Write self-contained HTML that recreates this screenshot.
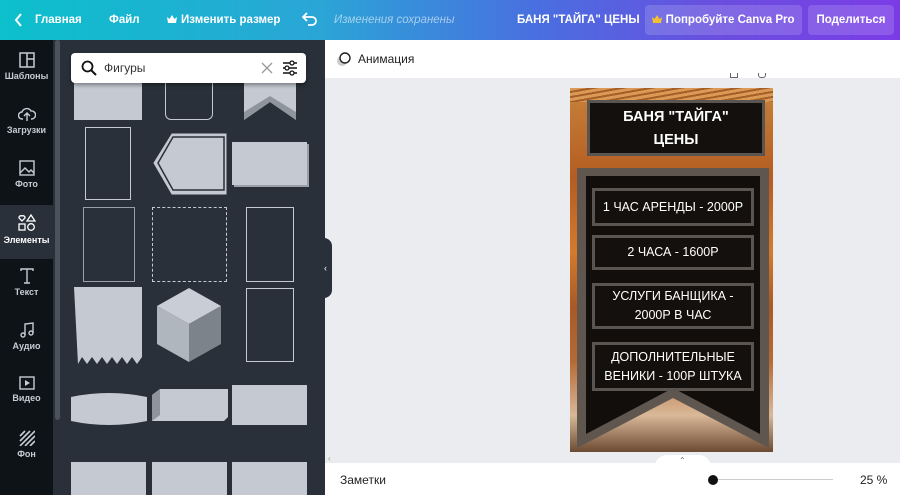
<!DOCTYPE html>
<html><head><meta charset="utf-8"><style>
*{margin:0;padding:0;box-sizing:border-box}
body{width:900px;height:495px;overflow:hidden;font-family:"Liberation Sans","DejaVu Sans",sans-serif;background:#ebecf0;position:relative}
.top{position:absolute;left:0;top:0;width:900px;height:40px;background:linear-gradient(90deg,#0cc0cc 0%,#2aa6d6 35%,#4a6ee0 60%,#6a4fe0 80%,#7b3ce6 100%);color:#fff;font-size:11.5px;font-weight:bold}
.top span{position:absolute;top:13px;line-height:14px;height:14px;white-space:nowrap}
.btn{position:absolute;top:5px;height:30px;background:rgba(255,255,255,.15);border-radius:4px;color:#fff;font-size:11.5px;font-weight:bold;line-height:30px;text-align:center}
.side{position:absolute;left:0;top:40px;width:53px;height:455px;background:#0e1318}
.si{position:absolute;left:0;width:53px;height:54px;color:#c8ccd2;font-size:9px;font-weight:bold;text-align:center}
.si svg{display:block;margin:9px auto 3px}
.panel{position:absolute;left:53px;top:40px;width:272px;height:455px;background:#293039;overflow:hidden}
.s{position:absolute;background:#c5cad2}
.o{position:absolute;border:1.5px solid #c5cad2}
.tool{position:absolute;left:325px;top:40px;width:575px;height:38px;background:#fff;font-size:12px;color:#222}
.bot{position:absolute;left:325px;top:463px;width:575px;height:32px;background:#fff;font-size:12px;color:#222}
.design{position:absolute;left:570px;top:88px;width:203px;height:364px;overflow:hidden;background:linear-gradient(180deg,#c7823a 0%,#b45c22 25%,#d57a2c 45%,#a85a26 60%,#b56a36 75%,#d9b898 90%,#6b4a32 100%)}
.pb{position:absolute;left:22px;width:162px;background:#14100d;border:3px solid #5a5550;color:#fff;font-size:12.5px;text-align:center;display:flex;align-items:center;justify-content:center;line-height:19px}
</style></head><body>
<div class="top">
<svg style="position:absolute;left:14px;top:13px" width="10" height="14"><path d="M7 1L2 7l5 6" stroke="#fff" stroke-width="2" fill="none"/></svg>
<span style="left:35px">Главная</span><span style="left:109px">Файл</span>
<svg style="position:absolute;left:167px;top:15px" width="10" height="9"><path d="M0 2l2.5 2L5 0l2.5 4L10 2 9 8H1z" fill="#fff"/></svg>
<span style="left:181px">Изменить размер</span>
<svg style="position:absolute;left:302px;top:12px" width="16" height="14"><path d="M5 1L1 5l4 4M1 5h9a4 4 0 010 8H6" stroke="#fff" stroke-width="1.8" fill="none"/></svg>
<span style="left:334px;font-style:italic;font-weight:normal;color:rgba(255,255,255,.55)">Изменения сохранены</span>
<span style="left:517px">БАНЯ "ТАЙГА" ЦЕНЫ</span>
<div class="btn" style="left:645px;width:157px"><svg width="10" height="9" style="vertical-align:-1px"><path d="M0 2l2.5 2L5 0l2.5 4L10 2 9 8H1z" fill="#f5c030"/></svg> Попробуйте Canva Pro</div>
<div class="btn" style="left:808px;width:86px">Поделиться</div>
</div>
<div class="side">
<div class="si" style="top:3px"><svg width="16" height="16"><rect x="1" y="1" width="14" height="14" fill="none" stroke="#c8ccd2" stroke-width="1.5"/><path d="M8 1v14M8 7h7" stroke="#c8ccd2" stroke-width="1.5"/></svg>Шаблоны</div>
<div class="si" style="top:57px"><svg width="18" height="16"><path d="M5 13H4a3 3 0 010-7 5 5 0 019-1 3.5 3.5 0 011 8h-1M9 15V8M6 10l3-3 3 3" fill="none" stroke="#c8ccd2" stroke-width="1.4"/></svg>Загрузки</div>
<div class="si" style="top:111px"><svg width="16" height="16"><rect x="1" y="1" width="14" height="14" fill="none" stroke="#c8ccd2" stroke-width="1.4"/><path d="M1 13l5-5 4 4 2-2 3 3" fill="none" stroke="#c8ccd2" stroke-width="1.4"/></svg>Фото</div>
<div class="si" style="top:165px;background:#293039;color:#fff"><svg width="18" height="18"><path d="M4 7L1 4a2 2 0 013-2 2 2 0 013 2z" fill="none" stroke="#fff" stroke-width="1.3"/><path d="M13 1l4 6h-8z" fill="none" stroke="#fff" stroke-width="1.3"/><rect x="1" y="10" width="6" height="6" fill="none" stroke="#fff" stroke-width="1.3"/><circle cx="13" cy="13" r="3.3" fill="none" stroke="#fff" stroke-width="1.3"/></svg>Элементы</div>
<div class="si" style="top:219px"><svg width="16" height="16"><path d="M2 3V1h12v2M8 1v14M5 15h6" fill="none" stroke="#c8ccd2" stroke-width="1.4"/></svg>Текст</div>
<div class="si" style="top:273px"><svg width="16" height="16"><path d="M6 13V2l8-1v10" fill="none" stroke="#c8ccd2" stroke-width="1.4"/><circle cx="4" cy="13" r="2" fill="none" stroke="#c8ccd2" stroke-width="1.4"/><circle cx="12" cy="11" r="2" fill="none" stroke="#c8ccd2" stroke-width="1.4"/></svg>Аудио</div>
<div class="si" style="top:327px"><svg width="16" height="14"><rect x="1" y="1" width="14" height="12" fill="none" stroke="#c8ccd2" stroke-width="1.4"/><path d="M6 4v6l5-3z" fill="#c8ccd2"/></svg>Видео</div>
<div class="si" style="top:381px"><svg width="16" height="16"><path d="M1 6L6 1M1 11L11 1M1 16L16 1M6 16L16 6M11 16l5-5" stroke="#c8ccd2" stroke-width="1.6"/></svg>Фон</div>
</div>
<div class="panel">
<div style="position:absolute;left:2px;top:0;width:5px;height:380px;background:#4a525c;border-radius:3px"></div>
<div class="s" style="left:21px;top:40px;width:68px;height:40px"></div>
<div class="o" style="left:112px;top:40px;width:48px;height:40px;border-top:none;border-radius:0 0 6px 6px"></div>
<svg style="position:absolute;left:191px;top:40px" width="52" height="40"><path d="M0 0h52v40L26 22 0 40z" fill="#c5cad2"/><path d="M0 40L26 22 52 40V32L26 16 0 32z" fill="#8f959d"/></svg>
<div class="o" style="left:32px;top:87px;width:46px;height:73px;border-width:1px"></div>
<svg style="position:absolute;left:99px;top:93px" width="75" height="62"><path d="M74 1H20L2 30l18 31h54z" fill="#c5cad2" stroke="#c5cad2" stroke-width="1"/><path d="M72 4H21L6 30l15 27h51z" fill="none" stroke="#293039" stroke-width="1.5"/></svg>
<div class="s" style="left:179px;top:102px;width:75px;height:43px;box-shadow:2px 2px 0 #9aa0a8"></div>
<div class="o" style="left:30px;top:167px;width:52px;height:75px;border-width:1px;border-color:#9aa0a8"></div>
<div class="o" style="left:99px;top:167px;width:75px;height:75px;border-style:dashed;border-width:1.5px"></div>
<div class="o" style="left:193px;top:167px;width:48px;height:75px"></div>
<svg style="position:absolute;left:21px;top:247px" width="68" height="78"><path d="M0 0h68v70l-5 7-5-7-5 7-5-7-5 7-5-7-5 7-5-7-5 7-5-7-5 7-5-7-4 7z" fill="#c5cad2"/></svg>
<svg style="position:absolute;left:104px;top:248px" width="64" height="74"><path d="M32 0l32 18L32 36 0 18z" fill="#c9ced6"/><path d="M0 18l32 18v38L0 56z" fill="#b0b6be"/><path d="M64 18L32 36v38l32-18z" fill="#7d838b"/></svg>
<div class="o" style="left:193px;top:248px;width:48px;height:74px"></div>
<svg style="position:absolute;left:18px;top:353px" width="76" height="32"><path d="M0 4Q38-4 76 4V28Q38 36 0 28z" fill="#c5cad2"/></svg>
<svg style="position:absolute;left:99px;top:349px" width="76" height="32"><path d="M8 0h68v28l-4 4H0V6z" fill="#c5cad2"/><path d="M0 6L8 0v26L0 32z" fill="#8f959d"/></svg>
<div class="s" style="left:179px;top:345px;width:75px;height:40px"></div>
<div class="s" style="left:18px;top:422px;width:75px;height:40px"></div>
<div class="s" style="left:99px;top:422px;width:75px;height:40px"></div>
<div class="s" style="left:179px;top:422px;width:75px;height:40px"></div>
<div style="position:absolute;left:18px;top:13px;width:235px;height:30px;background:#fff;border-radius:4px;box-shadow:0 2px 4px rgba(0,0,0,.4)">
<svg style="position:absolute;left:10px;top:7px" width="16" height="16"><circle cx="6.5" cy="6.5" r="5" fill="none" stroke="#111" stroke-width="1.8"/><path d="M10 10l5 5" stroke="#111" stroke-width="2"/></svg>
<span style="position:absolute;left:33px;top:8px;font-size:12px;color:#333">Фигуры</span>
<svg style="position:absolute;left:190px;top:9px" width="12" height="12"><path d="M1 1l10 10M11 1L1 11" stroke="#999" stroke-width="1.3"/></svg>
<svg style="position:absolute;left:211px;top:7px" width="16" height="16"><path d="M1 3h14M1 8h14M1 13h14" stroke="#111" stroke-width="1.4"/><circle cx="10" cy="3" r="2" fill="#fff" stroke="#111" stroke-width="1.3"/><circle cx="5" cy="8" r="2" fill="#fff" stroke="#111" stroke-width="1.3"/><circle cx="10" cy="13" r="2" fill="#fff" stroke="#111" stroke-width="1.3"/></svg>
</div>
</div>
<div style="position:absolute;left:320px;top:238px;width:12px;height:60px;background:#293039;border-radius:0 8px 8px 0"></div>
<div style="position:absolute;left:324px;top:263px;color:#fff;font-size:9px">‹</div>
<div class="tool">
<svg style="position:absolute;left:11px;top:11px" width="16" height="16"><circle cx="6" cy="10" r="5" fill="#ccc"/><circle cx="9" cy="7" r="5" fill="#fff" stroke="#222" stroke-width="1.4"/></svg>
<span style="position:absolute;left:33px;top:12px">Анимация</span>
</div>
<div style="position:absolute;left:730px;top:73px;width:8px;height:5px;border:1px solid #666;border-top:none"></div>
<div style="position:absolute;left:758px;top:73px;width:8px;height:5px;border:1px solid #666;border-top:none;border-radius:0 0 3px 3px"></div>
<div class="design">
<div style="position:absolute;left:0;top:0;width:203px;height:14px;background:repeating-linear-gradient(170deg,#d89a55 0 3px,#a65e28 3px 5px)"></div>
<div style="position:absolute;left:17px;top:12px;width:178px;height:56px;background:#14100d;border:3px solid #5a5550;color:#fff;font-weight:bold;font-size:14.5px;text-align:center;line-height:23px;padding-top:3px">БАНЯ "ТАЙГА"<br>ЦЕНЫ</div>
<svg style="position:absolute;left:7px;top:80px" width="192" height="284"><path d="M0 0h192v280L96 230 0 280z" fill="#5f5650"/><path d="M9 8h174v258L96 220 9 266z" fill="#120e0b"/></svg>
<div class="pb" style="top:100px;height:38px">1 ЧАС АРЕНДЫ - 2000Р</div>
<div class="pb" style="top:147px;height:35px">2 ЧАСА - 1600Р</div>
<div class="pb" style="top:195px;height:46px">УСЛУГИ БАНЩИКА -<br>2000Р В ЧАС</div>
<div class="pb" style="top:254px;height:49px">ДОПОЛНИТЕЛЬНЫЕ<br>ВЕНИКИ - 100Р ШТУКА</div>
</div>
<div style="position:absolute;left:328px;top:454px;font-size:8px;color:#999">‹</div>
<div style="position:absolute;left:655px;top:455px;width:56px;height:12px;background:#fff;border-radius:12px 12px 0 0"></div>
<div style="position:absolute;left:679px;top:456px;font-size:8px;color:#666">⌃</div>
<div class="bot">
<span style="position:absolute;left:15px;top:10px">Заметки</span>
<div style="position:absolute;left:388px;top:16px;width:120px;height:1px;background:#ccc"></div>
<div style="position:absolute;left:383px;top:12px;width:10px;height:10px;border-radius:50%;background:#111"></div>
<span style="position:absolute;left:535px;top:10px">25 %</span>
</div>
</body></html>
